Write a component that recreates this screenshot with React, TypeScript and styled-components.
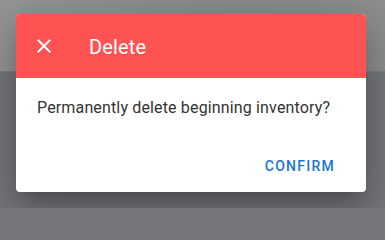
import React from "react";
import styled, { createGlobalStyle } from "styled-components";

const GlobalStyle = createGlobalStyle`
  html, body {
    margin: 0;
    padding: 0;
    width: 385px;
    height: 208px;
    overflow: hidden;
    background: #76777b;
    font-family: Roboto, "Liberation Sans", sans-serif;
  }
`;

const Page = styled.div`
  position: relative;
  width: 385px;
  height: 208px;
  display: flex;
  flex-direction: column;
`;

const TopShade = styled.div`
  height: 71px;
  flex-shrink: 0;
  background: linear-gradient(100deg, #959595 0%, #8a8a8a 60%, #8e8e8e 100%);
  border-bottom: 1px solid #7e7e80;
`;

const BottomShade = styled.div`
  flex: 1;
  background: #76777b;
`;

const Dialog = styled.div`
  position: absolute;
  left: 16px;
  top: 14px;
  width: 350px;
  height: 178px;
  display: flex;
  flex-direction: column;
  background: #ffffff;
  border-radius: 4px;
  overflow: hidden;
  box-shadow: 0 11px 15px -7px rgba(0, 0, 0, 0.2),
    0 24px 38px 3px rgba(0, 0, 0, 0.14), 0 9px 46px 8px rgba(0, 0, 0, 0.12);
`;

const Header = styled.div`
  height: 64px;
  flex-shrink: 0;
  display: flex;
  align-items: center;
  padding: 0 16px 0 8px;
  background: #ff5252;
  color: #ffffff;
`;

const CloseButton = styled.button`
  width: 40px;
  height: 40px;
  margin-right: 25px;
  padding: 0;
  border: none;
  background: transparent;
  color: #ffffff;
  display: flex;
  align-items: center;
  justify-content: center;
  cursor: pointer;
`;

const Title = styled.span`
  font-size: 20px;
  font-weight: 400;
  line-height: 24px;
  letter-spacing: 0.15px;
  margin-top: 1px;
`;

const Body = styled.div`
  flex: 1;
  padding: 18px 20px 0 21px;
  font-size: 16px;
  line-height: 24px;
  color: #333333;
  letter-spacing: 0.15px;
`;

const Actions = styled.div`
  display: flex;
  justify-content: flex-end;
  padding: 8px 16px 8px 16px;
`;

const TextButton = styled.button`
  height: 36px;
  padding: 0 15px 0 16px;
  border: none;
  border-radius: 4px;
  background: transparent;
  color: #1976d2;
  font-family: Roboto, "Liberation Sans", sans-serif;
  font-size: 14px;
  font-weight: 500;
  letter-spacing: 1.25px;
  text-transform: uppercase;
  cursor: pointer;
`;

const CloseIcon = () => (
  <svg width="24" height="24" viewBox="0 0 24 24" fill="currentColor">
    <path d="M19 6.41 17.59 5 12 10.59 6.41 5 5 6.41 10.59 12 5 17.59 6.41 19 12 13.41 17.59 19 19 17.59 13.41 12z" />
  </svg>
);

export default function App() {
  return (
    <Page>
      <GlobalStyle />
      <TopShade />
      <BottomShade />
      <Dialog>
        <Header>
          <CloseButton aria-label="close">
            <CloseIcon />
          </CloseButton>
          <Title>Delete</Title>
        </Header>
        <Body>Permanently delete beginning inventory?</Body>
        <Actions>
          <TextButton>Confirm</TextButton>
        </Actions>
      </Dialog>
    </Page>
  );
}
